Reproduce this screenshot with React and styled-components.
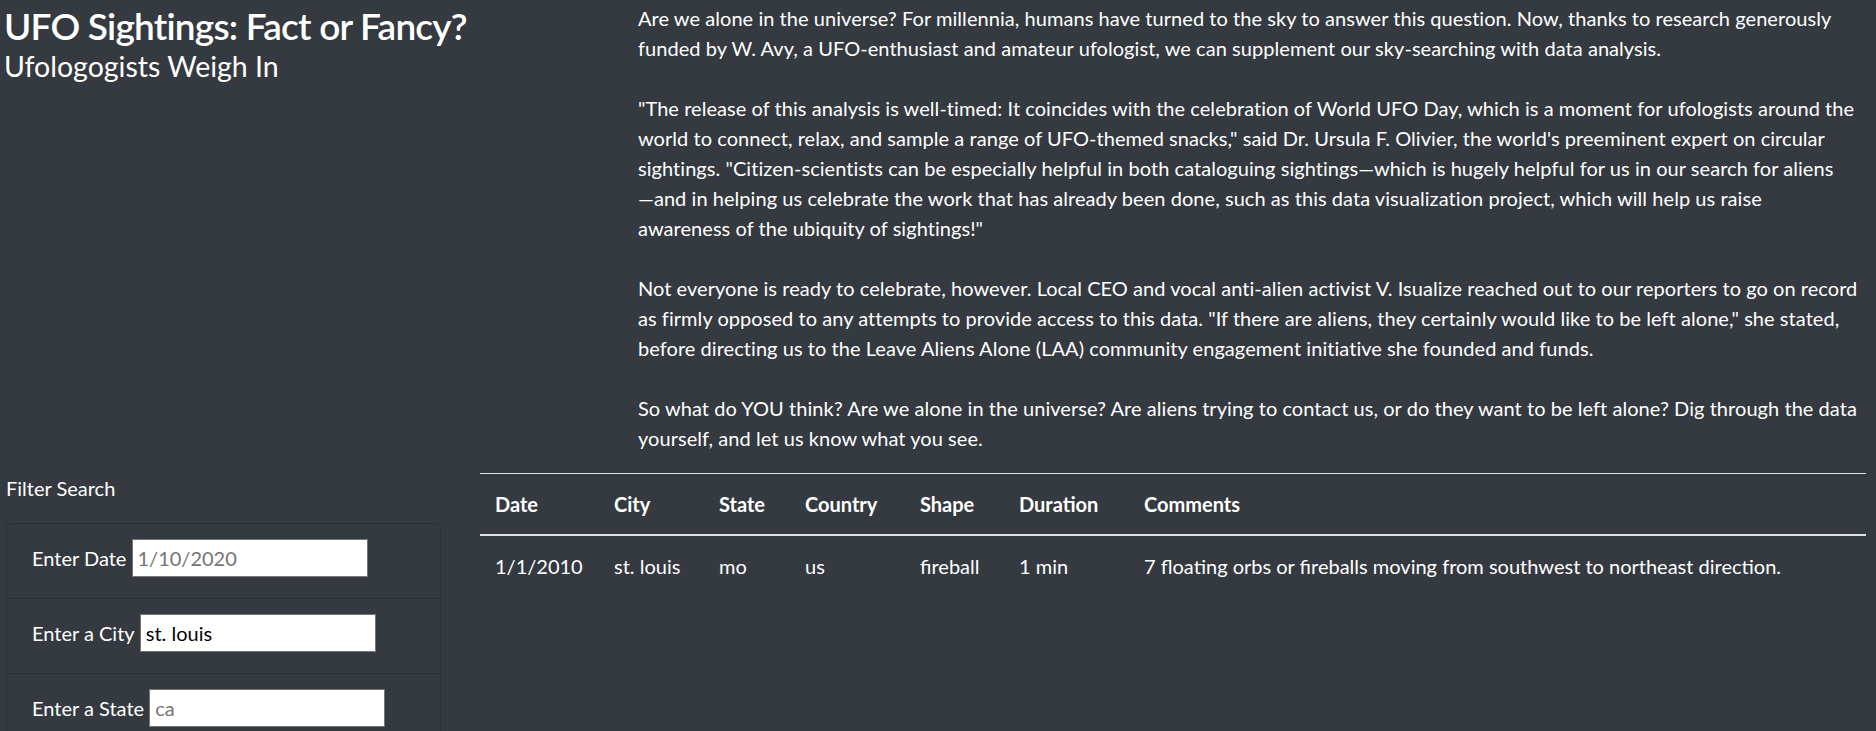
import React from 'react';
import styled, { createGlobalStyle } from 'styled-components';

const GlobalStyle = createGlobalStyle`
  *, *::before, *::after {
    box-sizing: border-box;
  }

  body {
    margin: 0;
    background-color: #343a40;
    color: #fff;
    font-family: 'Lato', 'Liberation Sans', sans-serif;
    font-size: 20px;
    line-height: 1.5;
  }
`;

const Page = styled.div`
  width: 100%;
`;

const TopRow = styled.div`
  display: grid;
  grid-template-columns: 638px 1fr;
`;

const Header = styled.header`
  padding-left: 4px;
`;

const Title = styled.h2`
  margin: 3px 0 0;
  font-size: 37px;
  font-weight: 600;
  letter-spacing: -0.8px;
  line-height: 1.25;
`;

const Subtitle = styled.h4`
  margin: 0;
  font-size: 28.5px;
  font-weight: 400;
  line-height: 1.25;
`;

const Article = styled.article`
  padding-top: 3px;
  padding-right: 10px;
  letter-spacing: 0.05px;
`;

const Paragraph = styled.p`
  margin: 0 0 30px;

  &:last-child {
    margin-bottom: 20px;
  }
`;

const BottomRow = styled.div`
  display: grid;
  grid-template-columns: 478px 1fr;
  align-items: start;
`;

const Sidebar = styled.aside`
  padding-left: 6px;
  padding-right: 37px;
`;

const FilterTitle = styled.div`
  margin-bottom: 20px;
`;

const FilterList = styled.ul`
  list-style: none;
  margin: 0;
  padding: 0;
  border: 1px solid rgba(0, 0, 0, 0.15);
  border-radius: 5px;
`;

const FilterItem = styled.li`
  padding: 15px 25px;
  border-top: ${props => (props.first ? 'none' : '1px solid rgba(0, 0, 0, 0.15)')};
`;

const Label = styled.label`
  display: inline-block;
  margin-bottom: 10px;
`;

const Input = styled.input`
  width: 236px;
  height: 38px;
  margin: 0;
  padding: 1px 5px;
  border: 1px solid #767676;
  background: #fff;
  color: #000;
  font-family: inherit;
  font-size: 20px;
  line-height: 30px;
  vertical-align: baseline;

  &::placeholder {
    color: #757575;
  }
`;

const TableWrap = styled.div`
  padding-left: 2px;
  padding-right: 10px;
`;

const Table = styled.table`
  width: 100%;
  border-collapse: collapse;
  table-layout: fixed;
  color: #fff;
`;

const Th = styled.th`
  padding: 15px;
  text-align: left;
  font-weight: 700;
  border-top: 1px solid #dee2e6;
  border-bottom: 2px solid #dee2e6;
  vertical-align: bottom;
`;

const Td = styled.td`
  padding: 15px;
  vertical-align: top;
`;

const filters = [
  { id: 'datetime', label: 'Enter Date', placeholder: '1/10/2020' },
  { id: 'city', label: 'Enter a City', value: 'st. louis' },
  { id: 'state', label: 'Enter a State', placeholder: 'ca' },
  { id: 'country', label: 'Enter a Country', placeholder: 'us' },
  { id: 'shape', label: 'Enter a Shape', placeholder: 'circle' },
];

const columns = [
  { name: 'Date', width: 119 },
  { name: 'City', width: 105 },
  { name: 'State', width: 86 },
  { name: 'Country', width: 115 },
  { name: 'Shape', width: 99 },
  { name: 'Duration', width: 125 },
  { name: 'Comments' },
];

const rows = [
  ['1/1/2010', 'st. louis', 'mo', 'us', 'fireball', '1 min', '7 floating orbs or fireballs moving from southwest to northeast direction.'],
];

export default function App() {
  return (
    <Page>
      <GlobalStyle />
      <TopRow>
        <Header>
          <Title>UFO Sightings: Fact or Fancy?</Title>
          <Subtitle>Ufologogists Weigh In</Subtitle>
        </Header>
        <Article>
          <Paragraph>
            Are we alone in the universe? For millennia, humans have turned to the sky to answer this
            question. Now, thanks to research generously funded by W. Avy, a UFO-enthusiast and amateur
            ufologist, we can supplement our sky-searching with data analysis.
          </Paragraph>
          <Paragraph>
            "The release of this analysis is well-timed: It coincides with the celebration of World UFO
            Day, which is a moment for ufologists around the world to connect, relax, and sample a range
            of UFO-themed snacks," said Dr. Ursula F. Olivier, the world's preeminent expert on circular
            sightings. "Citizen-scientists can be especially helpful in both cataloguing
            sightings&mdash;which is hugely helpful for us in our search for aliens
            <br />
            &mdash;and in helping us celebrate the work that has already been done, such as this data
            visualization project, which will help us raise
            <br />
            awareness of the ubiquity of sightings!"
          </Paragraph>
          <Paragraph>
            Not everyone is ready to celebrate, however. Local CEO and vocal anti-alien activist V.
            Isualize reached out to our reporters to go on record as firmly opposed to any attempts to
            provide access to this data. "If there are aliens, they certainly would like to be left
            alone," she stated, before directing us to the Leave Aliens Alone (LAA) community engagement
            initiative she founded and funds.
          </Paragraph>
          <Paragraph>
            So what do YOU think? Are we alone in the universe? Are aliens trying to contact us, or do
            they want to be left alone? Dig through the data yourself, and let us know what you see.
          </Paragraph>
        </Article>
      </TopRow>
      <BottomRow>
        <Sidebar>
          <FilterTitle>Filter Search</FilterTitle>
          <FilterList>
            {filters.map((f, idx) => (
              <FilterItem key={f.id} first={idx === 0}>
                <Label htmlFor={f.id}>{f.label}</Label>{' '}
                <Input
                  id={f.id}
                  type="text"
                  placeholder={f.placeholder}
                  defaultValue={f.value}
                />
              </FilterItem>
            ))}
          </FilterList>
        </Sidebar>
        <TableWrap>
          <Table>
            <colgroup>
              {columns.map(c => (
                <col key={c.name} style={c.width ? { width: c.width } : undefined} />
              ))}
            </colgroup>
            <thead>
              <tr>
                {columns.map(c => (
                  <Th key={c.name}>{c.name}</Th>
                ))}
              </tr>
            </thead>
            <tbody>
              {rows.map(r => (
                <tr key={r.join('-')}>
                  {r.map((cell, i) => (
                    <Td key={columns[i].name}>{cell}</Td>
                  ))}
                </tr>
              ))}
            </tbody>
          </Table>
        </TableWrap>
      </BottomRow>
    </Page>
  );
}
